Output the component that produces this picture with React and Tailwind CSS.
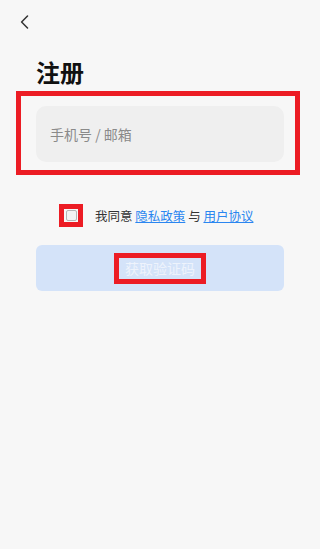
export default function App() {
  return (
    <div className="w-[320px] h-[549px] bg-[#f7f7f7] font-['Noto_Sans_CJK_SC','Noto_Sans',sans-serif] overflow-hidden">
      <div className="h-[58px] pt-[15px] pl-[20px]">
        <svg width="9" height="14" viewBox="0 0 9 14" fill="none">
          <path d="M7.5 1 L1.6 7 L7.5 13" stroke="#333" strokeWidth="1.5" strokeLinecap="round" strokeLinejoin="round" />
        </svg>
      </div>
      <div className="pl-[36px] text-[24px] leading-[28px] font-bold text-[#111]">注册</div>
      <div className="mt-[5px] ml-[16px] w-[284px] border-[5px] border-[#ec1c24] pl-[15px] pr-[11px] pt-[10px] pb-[8px]">
        <div className="h-[56px] rounded-[10px] bg-[#efefef] flex items-center pl-[14px] text-[14px] text-[#8a8a8a]">
          手机号 / 邮箱
        </div>
      </div>
      <div className="mt-[29px] ml-[59px] flex items-center h-[23px]">
        <div className="w-[24px] h-[23px] border-[5px] border-[#ec1c24] flex items-center justify-center">
          <div className="w-[11px] h-[11px] border border-[#b5b5b5] rounded-[2px] bg-[#f3f3f3]" />
        </div>
        <div className="ml-[12px] text-[12.5px] leading-[16px] text-[#333] whitespace-nowrap">
          我同意 <span className="text-[#2a86f0] underline">隐私政策</span> 与 <span className="text-[#2a86f0] underline">用户协议</span>
        </div>
      </div>
      <div className="mt-[18px] mx-[36px] h-[46px] rounded-[6px] bg-[#d4e3f9] flex items-center justify-center">
        <div className="border-[5px] border-[#ec1c24] px-[6px] text-[14px] leading-[21px] text-[#eef3fc]">
          获取验证码
        </div>
      </div>
    </div>
  );
}
